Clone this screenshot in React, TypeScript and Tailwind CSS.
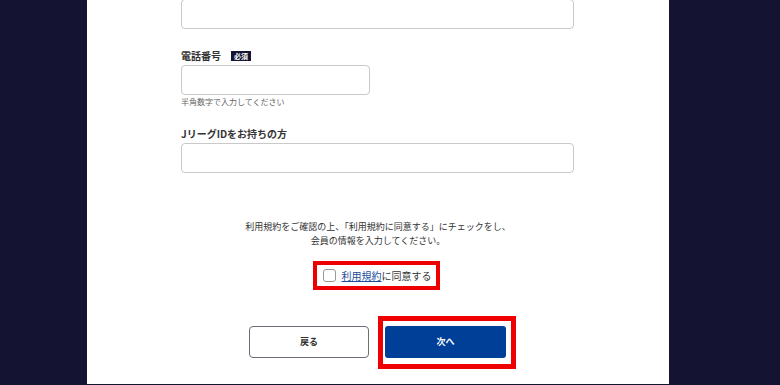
import React from "react";

const font = { fontFamily: '"Noto Sans CJK JP", "Noto Sans", sans-serif' };

const inputClass =
  "block h-[30px] rounded-[4px] border border-[#c9c9c9] bg-white px-2 text-[11px] outline-none";

export default function App() {
  return (
    <div className="h-[385px] w-[780px] overflow-hidden bg-[#141432]" style={font}>
      <div className="ml-[87px] h-full w-[582px] bg-white">
        <div className="ml-[94px] w-[393px] pt-0">
          <input className={`${inputClass} -mt-px w-[393px]`} />

          <div className="mt-[20px] flex items-center gap-[10px]">
            <span className="text-[10px] font-bold leading-[14px] text-[#333]">電話番号</span>
            <span className="bg-[#141432] px-[3px] text-[7px] font-bold leading-[10px] text-white">
              必須
            </span>
          </div>
          <input className={`${inputClass} mt-[2px] w-[189px]`} />
          <p className="mt-[1px] text-[8px] leading-[12px] text-[#666]">半角数字で入力してください</p>

          <p className="mt-[19px] text-[10px] font-bold leading-[14px] text-[#333]">
            JリーグIDをお持ちの方
          </p>
          <input className={`${inputClass} mt-[2px] w-[393px]`} />
        </div>

        <div className="mt-[47px] text-center text-[9px] leading-[14px] text-[#333]">
          <p>利用規約をご確認の上、「利用規約に同意する」にチェックをし、</p>
          <p>会員の情報を入力してください。</p>
        </div>

        <div className="mt-[13px] flex justify-center">
          <div className="ml-[-4px] flex h-[29px] w-[127px] items-center border-4 border-[#ee0000] pl-[6px]">
            <span className="h-[13px] w-[13px] rounded-[3px] border border-[#999] bg-white" />
            <span className="ml-[6px] text-[10px] leading-[14px] text-[#333]">
              <a className="text-[#1d4c9c] underline">利用規約</a>に同意する
            </span>
          </div>
        </div>

        <div className="mt-[26px] flex justify-center">
          <div className="ml-[9px] flex items-start">
            <button className="mt-[10px] h-[32px] w-[120px] rounded-[4px] border-[1.5px] border-[#6c6c7c] bg-white text-[9px] font-bold text-[#333]">
              戻る
            </button>
            <div className="ml-[9px] h-[53px] w-[138px] border-[5px] border-[#ee0000] pl-[2px] pt-[5px]">
              <button className="h-[32px] w-[121px] rounded-[3px] bg-[#003f98] text-[9px] font-bold text-white">
                次へ
              </button>
            </div>
          </div>
        </div>
      </div>
    </div>
  );
}
